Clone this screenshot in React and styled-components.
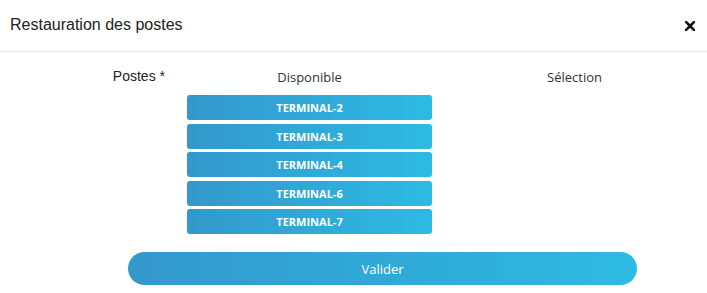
import React from 'react';
import styled, { createGlobalStyle } from 'styled-components';

const GlobalStyle = createGlobalStyle`
  body {
    margin: 0;
    background: #fff;
    font-family: "Open Sans", "Noto Sans", sans-serif;
  }
`

const Modal = styled.div`
  width: 707px;
  height: 293px;
  background: #fff;
  overflow: hidden;
`
const Header = styled.div`
  height: 52px;
  display: flex;
  align-items: center;
  justify-content: space-between;
  padding: 0 11px 0 10px;
  border-bottom: 1px solid #e5e5e5;
  box-sizing: border-box;
`
const Title = styled.h4`
  margin: 0;
  font-family: "Liberation Sans", Arial, sans-serif;
  font-weight: normal;
  font-size: 16px;
  color: #222;
  padding-bottom: 1px;
`
const Close = styled.button`
  border: 0;
  background: none;
  padding: 0;
  width: 12px;
  height: 12px;
  display: flex;
  align-items: center;
  justify-content: center;
  cursor: pointer;
`
const Body = styled.div`
  padding-top: 15px;
`
const FormRow = styled.div`
  display: grid;
  grid-template-columns: 177px 1fr 1fr;
`
const Label = styled.label`
  font-family: "Liberation Sans", Arial, sans-serif;
  font-size: 14px;
  color: #222;
  text-align: right;
  padding-right: 12px;
  line-height: 18px;
`
const ListColumn = styled.div`
  display: flex;
  flex-direction: column;
  padding: 0 10px;
`
const ListHeading = styled.div`
  text-align: center;
  font-size: 13px;
  color: #333;
  line-height: 20px;
  margin-bottom: 8px;
`
const Item = styled.div`
  height: 25px;
  margin-bottom: 3.5px;
  border-radius: 3px;
  background: linear-gradient(90deg, #3398cc 0%, #2dbae3 100%);
  color: #fff;
  font-weight: bold;
  font-size: 11px;
  display: flex;
  align-items: center;
  justify-content: center;
  cursor: pointer;
`
const Footer = styled.div`
  padding: 14.5px 70px 0 128px;
`
const Submit = styled.button`
  width: 100%;
  height: 33px;
  border: 0;
  border-radius: 17px;
  background: linear-gradient(90deg, #3398cc 0%, #2dbae3 100%);
  color: #fff;
  font-family: "Open Sans", "Noto Sans", sans-serif;
  font-size: 13px;
  cursor: pointer;
`

const available = ['TERMINAL-2', 'TERMINAL-3', 'TERMINAL-4', 'TERMINAL-6', 'TERMINAL-7']

export default function App() {
  return (
    <Modal>
      <GlobalStyle />
      <Header>
        <Title>Restauration des postes</Title>
        <Close aria-label="Fermer">
          <svg width="10" height="10" viewBox="0 0 10 10">
            <path d="M1 1 L9 9 M9 1 L1 9" stroke="#111" strokeWidth="2.6" strokeLinecap="square" />
          </svg>
        </Close>
      </Header>
      <Body>
        <FormRow>
          <Label>Postes *</Label>
          <ListColumn>
            <ListHeading>Disponible</ListHeading>
            {available.map(name => (
              <Item key={name}>{name}</Item>
            ))}
          </ListColumn>
          <ListColumn>
            <ListHeading>Sélection</ListHeading>
          </ListColumn>
        </FormRow>
        <Footer>
          <Submit>Valider</Submit>
        </Footer>
      </Body>
    </Modal>
  )
}
